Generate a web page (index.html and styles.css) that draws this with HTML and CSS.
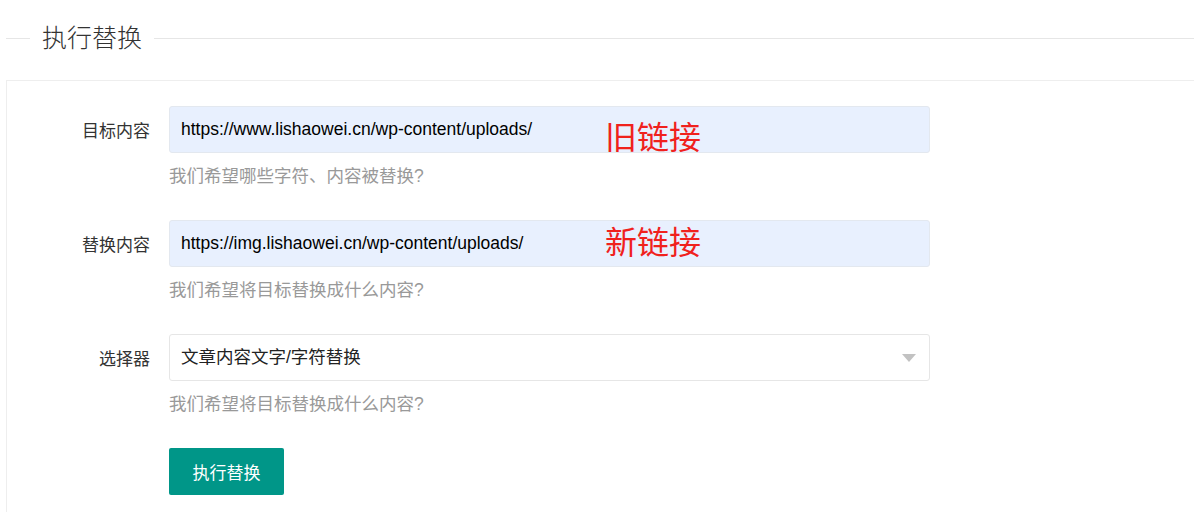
FILE: index.html
```html
<!DOCTYPE html>
<html lang="zh-CN">
<head>
<meta charset="utf-8">
<title>执行替换</title>
<link rel="stylesheet" href="styles.css">
</head>
<body>
<div class="page">
  <div class="legend-row">
    <span class="line-short"></span>
    <span class="legend-title">执行替换</span>
    <span class="line-long"></span>
  </div>
  <div class="card">
    <div class="form-item">
      <div class="row">
        <label class="label">目标内容</label>
        <div class="field">
          <div class="input autofill">https://www.lishaowei.cn/wp-content/uploads/</div>
          <span class="note note-old">旧链接</span>
        </div>
      </div>
      <div class="hint">我们希望哪些字符、内容被替换?</div>
    </div>
    <div class="form-item">
      <div class="row">
        <label class="label">替换内容</label>
        <div class="field">
          <div class="input autofill">https://img.lishaowei.cn/wp-content/uploads/</div>
          <span class="note note-new">新链接</span>
        </div>
      </div>
      <div class="hint">我们希望将目标替换成什么内容?</div>
    </div>
    <div class="form-item">
      <div class="row">
        <label class="label">选择器</label>
        <div class="field">
          <div class="input select">文章内容文字/字符替换<span class="caret"></span></div>
        </div>
      </div>
      <div class="hint">我们希望将目标替换成什么内容?</div>
    </div>
    <div class="actions">
      <button class="btn" type="button">执行替换</button>
    </div>
  </div>
</div>
</body>
</html>
```
FILE: styles.css
```css
html, body {
  margin: 0;
  padding: 0;
  background: #fff;
}
body {
  font-family: "Liberation Sans", "Noto Sans CJK SC", sans-serif;
  color: #333;
}
.page {
  padding-top: 20px;
  height: 492px;
  overflow: hidden;
}
.legend-row {
  display: flex;
  align-items: center;
  margin-left: 6px;
  height: 36px;
}
.line-short {
  width: 24px;
  border-top: 1px solid #e6e6e6;
}
.line-long {
  flex: 1;
  border-top: 1px solid #e6e6e6;
}
.legend-title {
  padding: 0 12px;
  font-size: 25px;
  line-height: 36px;
  font-weight: 300;
  color: #333;
}
.card {
  margin: 24px -20px 0 6px;
  border: 1px solid #eeeeee;
  padding-top: 25px;
  height: 440px;
}
.form-item {
  margin-bottom: 34px;
}
.row {
  display: flex;
  align-items: center;
}
.label {
  width: 143px;
  padding-right: 19px;
  text-align: right;
  font-size: 17px;
  color: #333;
}
.field {
  position: relative;
}
.input {
  box-sizing: border-box;
  width: 761px;
  height: 47px;
  border: 1px solid #e6e6e6;
  border-radius: 3px;
  padding-left: 11px;
  font-size: 17.5px;
  line-height: 45px;
  color: #000;
  background: #fff;
}
.autofill {
  background: #e8f0fe;
  border-color: #e3e8ef;
}
.select {
  position: relative;
  color: #222;
}
.caret {
  position: absolute;
  right: 13px;
  top: 19px;
  width: 0;
  height: 0;
  border-left: 7px solid transparent;
  border-right: 7px solid transparent;
  border-top: 8px solid #c2c2c2;
}
.note {
  position: absolute;
  left: 436px;
  font-size: 32px;
  line-height: 32px;
  color: #f0211d;
  white-space: nowrap;
}
.note-old {
  top: 16px;
}
.note-new {
  top: 7px;
}
.hint {
  margin: 13px 0 0 162px;
  font-size: 17.5px;
  line-height: 20px;
  color: #999;
}
.actions {
  padding-left: 162px;
}
.btn {
  display: block;
  width: 115px;
  height: 47px;
  border: none;
  border-radius: 2px;
  background: #009688;
  color: #fff;
  font-family: "Liberation Sans", "Noto Sans CJK SC", sans-serif;
  font-size: 17px;
  padding: 0;
}
```
